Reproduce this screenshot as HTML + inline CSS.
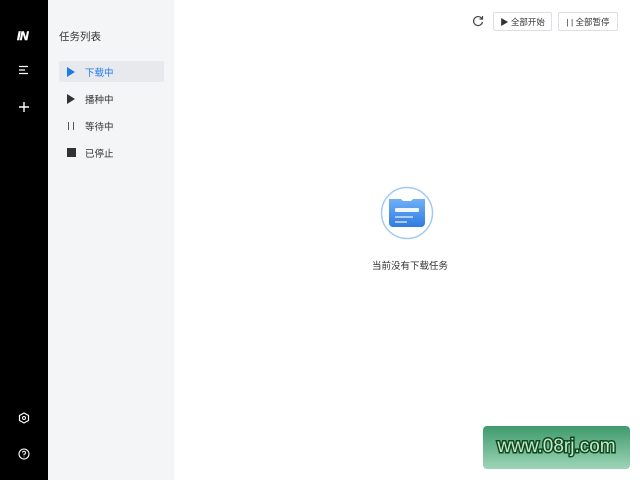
<!DOCTYPE html>
<html><head><meta charset="utf-8"><style>
body{margin:0;width:640px;height:480px;position:relative;overflow:hidden;background:#fff;font-family:"Liberation Sans","Noto Sans CJK SC",sans-serif;}
.side{position:absolute;left:0;top:0;width:48px;height:480px;background:#000;}
.panel{position:absolute;left:48px;top:0;width:126px;height:480px;background:#f4f5f7;}
.t{position:absolute;font-size:10px;color:#333;}
.item{position:absolute;left:59px;width:105px;height:21px;}
.item span{position:absolute;left:26px;top:4px;font-size:9.5px;color:#333;}
.btn{position:absolute;top:12px;height:19px;border:1px solid #dcdfe6;border-radius:2px;font-size:8.5px;color:#333;line-height:19px;text-align:center;box-sizing:border-box;}
</style></head><body>
<div class="side">
 <div style="position:absolute;left:17px;top:29px;color:#fff;font-weight:900;font-style:italic;font-size:12px;letter-spacing:-0.5px;-webkit-text-stroke:0.5px #fff">IN</div>
 <svg style="position:absolute;left:18px;top:65px" width="12" height="10"><path d="M1 1.5h9M1 5h6M1 8.5h9" stroke="#fff" stroke-width="1.3"/></svg>
 <svg style="position:absolute;left:18px;top:101px" width="12" height="12"><path d="M6 1v10M1 6h10" stroke="#fff" stroke-width="1.4"/></svg>
 <svg style="position:absolute;left:18px;top:412px" width="12" height="12"><path d="M6 1l4.5 2.5v5L6 11 1.5 8.5v-5z" fill="none" stroke="#fff" stroke-width="1.2"/><circle cx="6" cy="6" r="1.5" fill="none" stroke="#fff" stroke-width="1"/></svg>
 <svg style="position:absolute;left:18px;top:448px" width="12" height="12"><circle cx="6" cy="6" r="5" fill="none" stroke="#fff" stroke-width="1.1"/><path d="M4.5 4.6a1.5 1.5 0 1 1 1.5 1.6v1.2M6 8.6v.8" fill="none" stroke="#fff" stroke-width="1"/></svg>
</div>
<div class="panel"></div>
<div class="t" style="left:59px;top:29px;font-size:10.5px">任务列表</div>
<div class="item" style="top:61px;background:#e8e9ed;border-radius:2px">
 <svg style="position:absolute;left:8px;top:6px" width="9" height="10"><path d="M0 0L8 5L0 10z" fill="#1e7ce8"/></svg><span style="color:#1e7ce8">下载中</span></div>
<div class="item" style="top:88px"><svg style="position:absolute;left:8px;top:6px" width="9" height="10"><path d="M0 0L8 5L0 10z" fill="#333"/></svg><span>播种中</span></div>
<div class="item" style="top:115px"><svg style="position:absolute;left:8px;top:6px" width="9" height="10"><path d="M1.5 1v8M6.5 1v8" stroke="#555" stroke-width="1"/></svg><span>等待中</span></div>
<div class="item" style="top:142px"><div style="position:absolute;left:8px;top:6px;width:9px;height:9px;background:#333"></div><span>已停止</span></div>
<svg style="position:absolute;left:472px;top:15px" width="12" height="12"><path d="M9.8 3.5A4.5 4.5 0 1 0 10.5 7" fill="none" stroke="#444" stroke-width="1.2"/><path d="M10.5 1v3h-3" fill="none" stroke="#444" stroke-width="1.2"/></svg>
<div class="btn" style="left:493px;width:59px">▶ 全部开始</div>
<div class="btn" style="left:558px;width:60px">| | 全部暂停</div>
<svg style="position:absolute;left:380px;top:186px" width="54" height="54">
 <defs><linearGradient id="g" x1="0" y1="0" x2="0" y2="1"><stop offset="0" stop-color="#6fb0f7"/><stop offset="1" stop-color="#2f7be0"/></linearGradient></defs>
 <circle cx="27" cy="27" r="25.5" fill="#fff" stroke="#9fcaf6" stroke-width="1.5"/>
 <path d="M9 13h12l2 2h8l2-2h12v24a4 4 0 0 1-4 4H13a4 4 0 0 1-4-4z" fill="url(#g)"/>
 <rect x="15" y="22" width="24" height="4" rx="1" fill="#fff" opacity=".9"/>
 <path d="M15 31h18M15 36h12" stroke="#fff" stroke-width="1.3" opacity=".9"/>
</svg>
<div class="t" style="left:372px;top:258px;font-size:9.5px">当前没有下载任务</div>
<div style="position:absolute;left:483px;top:426px;width:147px;height:43px;border-radius:4px;background:linear-gradient(#3f9a6c,#9dd5b6);"></div>
<div style="position:absolute;left:483px;top:436px;width:147px;text-align:center;font-size:19px;color:#c8e6c8;font-family:'Liberation Sans',sans-serif;-webkit-text-stroke:3px #0d4a22;paint-order:stroke fill;">www.08rj.com</div>
</body></html>
